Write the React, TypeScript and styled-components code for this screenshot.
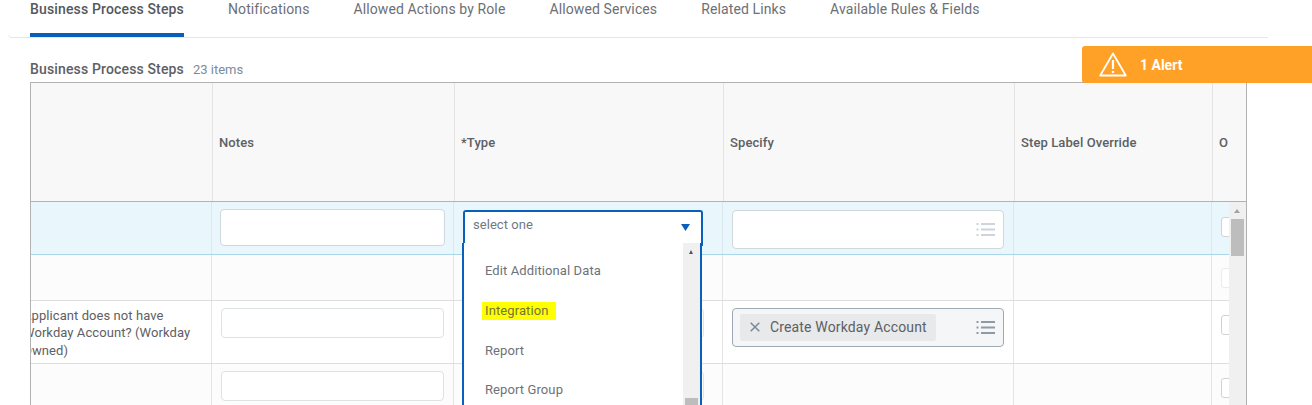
import React from "react";
import styled, { createGlobalStyle } from "styled-components";

const Global = createGlobalStyle`
  html, body { margin: 0; padding: 0; background: #fff; }
  body { font-family: Roboto, "Liberation Sans", sans-serif; color: #4f5257; }
  #root { width: 1312px; height: 405px; overflow: hidden; position: relative; }
`;

const Page = styled.div`
  position: relative;
  width: 1312px;
  height: 405px;
  overflow: hidden;
`;

const TabBar = styled.div`
  display: flex;
  gap: 44px;
  height: 37px;
  margin: 0 44px 0 8px;
  padding-left: 22px;
  border-bottom: 1px solid #e6e6e6;
  border-bottom-left-radius: 4px;
`;

const Tab = styled.div<{ $active?: boolean }>`
  height: 33px;
  padding-top: 1px;
  box-sizing: border-box;
  font-size: 14px;
  line-height: 17px;
  letter-spacing: ${(p) => (p.$active ? "0.15px" : "0.11px")};
  font-weight: ${(p) => (p.$active ? 500 : 400)};
  color: ${(p) => (p.$active ? "#55585c" : "#6c7076")};
  ${(p) => (p.$active ? "box-shadow: 0 4px 0 #0b5fbc;" : "")}
`;

const TitleRow = styled.div`
  display: flex;
  align-items: baseline;
  gap: 9px;
  margin: 22px 0 0 30px;
  height: 22px;
  line-height: 18px;
`;

const Title = styled.span`
  font-size: 14px;
  font-weight: 500;
  letter-spacing: 0.15px;
  color: #5d6064;
`;

const Count = styled.span`
  font-size: 13px;
  color: #7c8b9b;
`;

const Table = styled.div`
  position: relative;
  margin-left: 30px;
  width: 1217px;
  box-sizing: border-box;
  border: 1px solid #b2b2b2;
  border-bottom: 0;
`;

const HeaderRow = styled.div`
  display: grid;
  grid-template-columns: 182px 242px 269px 291px 198px 1fr;
  height: 118px;
  background: #f8f8f8;
  border-bottom: 1px solid #b2b2b2;
`;

const HeaderCell = styled.div`
  display: flex;
  align-items: center;
  padding-left: 6px;
  box-sizing: border-box;
  border-right: 1px solid #e4e4e4;
  font-size: 13px;
  font-weight: 500;
  letter-spacing: 0.1px;
  color: #5d6064;
  &:last-child { border-right: 0; }
`;

const Body = styled.div`
  position: relative;
`;

const Row = styled.div<{ $h: number; $bg: string; $line: string }>`
  display: grid;
  grid-template-columns: 181px 242px 269px 291px 198px 1fr;
  height: ${(p) => p.$h}px;
  box-sizing: border-box;
  background: ${(p) => p.$bg};
  border-bottom: 1px solid ${(p) => p.$line};
`;

const Cell = styled.div<{ $line?: string }>`
  position: relative;
  box-sizing: border-box;
  border-right: 1px solid ${(p) => p.$line ?? "#e4e4e4"};
  padding: 7px 8px 0;
  &:last-child { border-right: 0; padding-left: 9px; }
`;

const ClippedCell = styled(Cell)`
  overflow: hidden;
  padding: 6px 0 0;
`;

const StepName = styled.div`
  width: 190px;
  margin-left: -8px;
  font-size: 13px;
  line-height: 17.4px;
  letter-spacing: 0.07px;
  color: #5d6064;
`;

const TextInput = styled.div<{ $h: number; $border?: string; $inset?: boolean }>`
  height: ${(p) => p.$h}px;
  box-sizing: border-box;
  background: #fff;
  border: 1px solid ${(p) => p.$border ?? "#cfd8dc"};
  border-radius: 4px;
  ${(p) => (p.$inset ? "margin: 0 1px;" : "")}
`;

const TypeInput = styled(TextInput)`
  width: 241px;
  margin-left: 1px;
`;

const SpecifyInput = styled.div<{ $filled?: boolean }>`
  display: flex;
  align-items: center;
  justify-content: space-between;
  height: 39px;
  width: 272px;
  margin: ${(p) => (p.$filled ? "0" : "1px")} 0 0 1px;
  box-sizing: border-box;
  padding: 0 8px 0 7px;
  background: ${(p) => (p.$filled ? "#f4f6f8" : "#fff")};
  border: 1px solid ${(p) => (p.$filled ? "#a0aab4" : "#cfd8dc")};
  border-radius: 4px;
  color: ${(p) => (p.$filled ? "#8f9aa5" : "#ced4da")};
`;

const Chip = styled.div`
  display: flex;
  align-items: center;
  gap: 10px;
  width: 196px;
  height: 27px;
  box-sizing: border-box;
  padding: 0 0 1px 10px;
  background: #e7e9eb;
  border-radius: 2px;
  font-size: 14px;
  letter-spacing: 0.15px;
  color: #5d6064;
`;

const ChipX = styled.svg`
  width: 10px;
  height: 10px;
  flex: none;
`;

const ListIconSvg = styled.svg`
  width: 19px;
  height: 15px;
  flex: none;
`;

const ListIcon = () => (
  <ListIconSvg viewBox="0 0 19 15" fill="currentColor" aria-hidden>
    <rect x="0.5" y="1" width="2" height="2" />
    <rect x="5" y="1" width="14" height="2" />
    <rect x="0.5" y="6.5" width="2" height="2" />
    <rect x="5" y="6.5" width="14" height="2" />
    <rect x="0.5" y="12" width="2" height="2" />
    <rect x="5" y="12" width="14" height="2" />
  </ListIconSvg>
);

const Checkbox = styled.div<{ $faint?: boolean; $top: number }>`
  width: 20px;
  height: 20px;
  margin: ${(p) => p.$top}px 0 0 0;
  box-sizing: border-box;
  background: #fff;
  border: 1px solid ${(p) => (p.$faint ? "#ececec" : "#cfd3d6")};
  border-radius: 3px;
`;

const SelectBox = styled.div`
  position: absolute;
  left: 9px;
  top: 8px;
  z-index: 2;
  width: 240px;
  height: 36px;
  box-sizing: border-box;
  display: flex;
  align-items: flex-start;
  justify-content: space-between;
  padding: 5px 11px 0 8px;
  background: #fff;
  border: 2px solid #0b5fbc;
  border-bottom: 0;
  border-radius: 3px 3px 0 0;
  font-size: 13px;
  line-height: 16px;
  letter-spacing: 0.05px;
  color: #6f7a85;
`;

const Caret = styled.svg`
  width: 9px;
  height: 7px;
  margin-top: 7px;
`;

const Menu = styled.div`
  position: absolute;
  left: 8px;
  top: 41px;
  z-index: 3;
  width: 240px;
  height: 170px;
  box-sizing: border-box;
  background: #fff;
  border-left: 2px solid #0b5fbc;
  border-right: 2px solid #0b5fbc;
  padding: 18px 0 0 21px;
`;

const MenuItem = styled.div<{ $gap: number }>`
  height: 20px;
  margin-bottom: ${(p) => p.$gap}px;
  font-size: 13px;
  line-height: 20px;
  letter-spacing: 0.1px;
  color: #6e7277;
`;

const Marked = styled.span`
  display: inline-block;
  height: 18px;
  line-height: 18px;
  margin-left: -3px;
  padding: 0 2px 0 3px;
  width: 69px;
  background: #ffff00;
  color: #74763a;
`;

const MenuScroll = styled.div`
  position: absolute;
  top: 0;
  right: 0;
  bottom: 0;
  width: 17px;
  background: #f0f0f0;
`;

const MenuArrow = styled.div`
  position: absolute;
  top: 7px;
  left: 6px;
  width: 0;
  height: 0;
  border-left: 2.5px solid transparent;
  border-right: 2.5px solid transparent;
  border-bottom: 4px solid #555;
`;

const MenuThumb = styled.div`
  position: absolute;
  top: 155px;
  left: 2px;
  width: 13px;
  height: 20px;
  background: #bdbdbd;
`;

const Scrollbar = styled.div`
  position: absolute;
  top: 0;
  right: 0;
  bottom: 0;
  width: 17px;
  background: #f0f0f0;
`;

const ScrollArrow = styled.div`
  position: absolute;
  top: 7px;
  left: 5px;
  width: 0;
  height: 0;
  border-left: 3.5px solid transparent;
  border-right: 3.5px solid transparent;
  border-bottom: 4px solid #a3a3a3;
`;

const ScrollThumb = styled.div`
  position: absolute;
  top: 17px;
  left: 2px;
  width: 13px;
  height: 37px;
  background: #bdbdbd;
`;

const Alert = styled.div`
  position: absolute;
  left: 1082px;
  top: 46px;
  width: 230px;
  height: 37px;
  box-sizing: border-box;
  display: flex;
  align-items: center;
  gap: 13px;
  padding-left: 17px;
  background: #ffa126;
  border-radius: 3px 0 0 3px;
  z-index: 5;
  font-size: 14px;
  font-weight: 700;
  color: #fff;
`;

const AlertIcon = styled.svg`
  width: 28px;
  height: 25px;
  flex: none;
`;

const tabs = [
  "Business Process Steps",
  "Notifications",
  "Allowed Actions by Role",
  "Allowed Services",
  "Related Links",
  "Available Rules & Fields",
];

const headers = ["", "Notes", "*Type", "Specify", "Step Label Override", "O"];

export default function App() {
  return (
    <Page>
      <Global />
      <TabBar>
        {tabs.map((t, i) => (
          <Tab key={t} $active={i === 0}>
            {t}
          </Tab>
        ))}
      </TabBar>
      <TitleRow>
        <Title>Business Process Steps</Title>
        <Count>23 items</Count>
      </TitleRow>
      <Table>
        <HeaderRow>
          {headers.map((h, i) => (
            <HeaderCell key={i}>{h}</HeaderCell>
          ))}
        </HeaderRow>
        <Body>
          <Row $h={53} $bg="#e9f7fd" $line="#a9d6e8">
            <Cell $line="#dbe8ee" />
            <Cell $line="#dbe8ee">
              <TextInput $h={37} />
            </Cell>
            <Cell $line="#dbe8ee">
              <SelectBox>
                select one
                <Caret viewBox="0 0 9 7" aria-hidden>
                  <path d="M0 0h9L4.5 7z" fill="#0b5fbc" />
                </Caret>
              </SelectBox>
              <Menu>
                <MenuItem $gap={20}>Edit Additional Data</MenuItem>
                <MenuItem $gap={20}>
                  <Marked>Integration</Marked>
                </MenuItem>
                <MenuItem $gap={19}>Report</MenuItem>
                <MenuItem $gap={0}>Report Group</MenuItem>
                <MenuScroll>
                  <MenuArrow />
                  <MenuThumb />
                </MenuScroll>
              </Menu>
            </Cell>
            <Cell $line="#dbe8ee">
              <SpecifyInput>
                <span />
                <ListIcon />
              </SpecifyInput>
            </Cell>
            <Cell $line="#dbe8ee" />
            <Cell>
              <Checkbox $top={8} />
            </Cell>
          </Row>
          <Row $h={46} $bg="#fcfcfc" $line="#dedede">
            <Cell />
            <Cell />
            <Cell />
            <Cell />
            <Cell />
            <Cell>
              <Checkbox $faint $top={6} />
            </Cell>
          </Row>
          <Row $h={63} $bg="#fff" $line="#dedede">
            <ClippedCell>
              <StepName>
                Applicant does not have
                <br />
                Workday Account? (Workday
                <br />
                Owned)
              </StepName>
            </ClippedCell>
            <Cell>
              <TextInput $h={30} $border="#dde2e5" $inset />
            </Cell>
            <Cell>
              <TypeInput $h={30} $border="#dde2e5" />
            </Cell>
            <Cell>
              <SpecifyInput $filled>
                <Chip>
                  <ChipX viewBox="0 0 10 10" aria-hidden>
                    <path d="M.7.7l8.6 8.6M9.3.7L.7 9.3" stroke="#7d8894" strokeWidth="1.5" fill="none" />
                  </ChipX>
                  Create Workday Account
                </Chip>
                <ListIcon />
              </SpecifyInput>
            </Cell>
            <Cell />
            <Cell>
              <Checkbox $top={7} />
            </Cell>
          </Row>
          <Row $h={80} $bg="#fcfcfc" $line="#dedede">
            <Cell />
            <Cell>
              <TextInput $h={30} $border="#dde2e5" $inset />
            </Cell>
            <Cell>
              <TypeInput $h={30} $border="#dde2e5" />
            </Cell>
            <Cell />
            <Cell />
            <Cell>
              <Checkbox $top={7} />
            </Cell>
          </Row>
          <Scrollbar>
            <ScrollArrow />
            <ScrollThumb />
          </Scrollbar>
        </Body>
      </Table>
      <Alert>
        <AlertIcon viewBox="0 0 28 25" aria-hidden>
          <path d="M14 1.5L1.2 23.5h25.6z" fill="none" stroke="#fff" strokeWidth="1.8" strokeLinejoin="round" />
          <path d="M14 8v9" stroke="#fff" strokeWidth="2.2" />
          <circle cx="14" cy="20" r="1.3" fill="#fff" />
        </AlertIcon>
        1 Alert
      </Alert>
    </Page>
  );
}
